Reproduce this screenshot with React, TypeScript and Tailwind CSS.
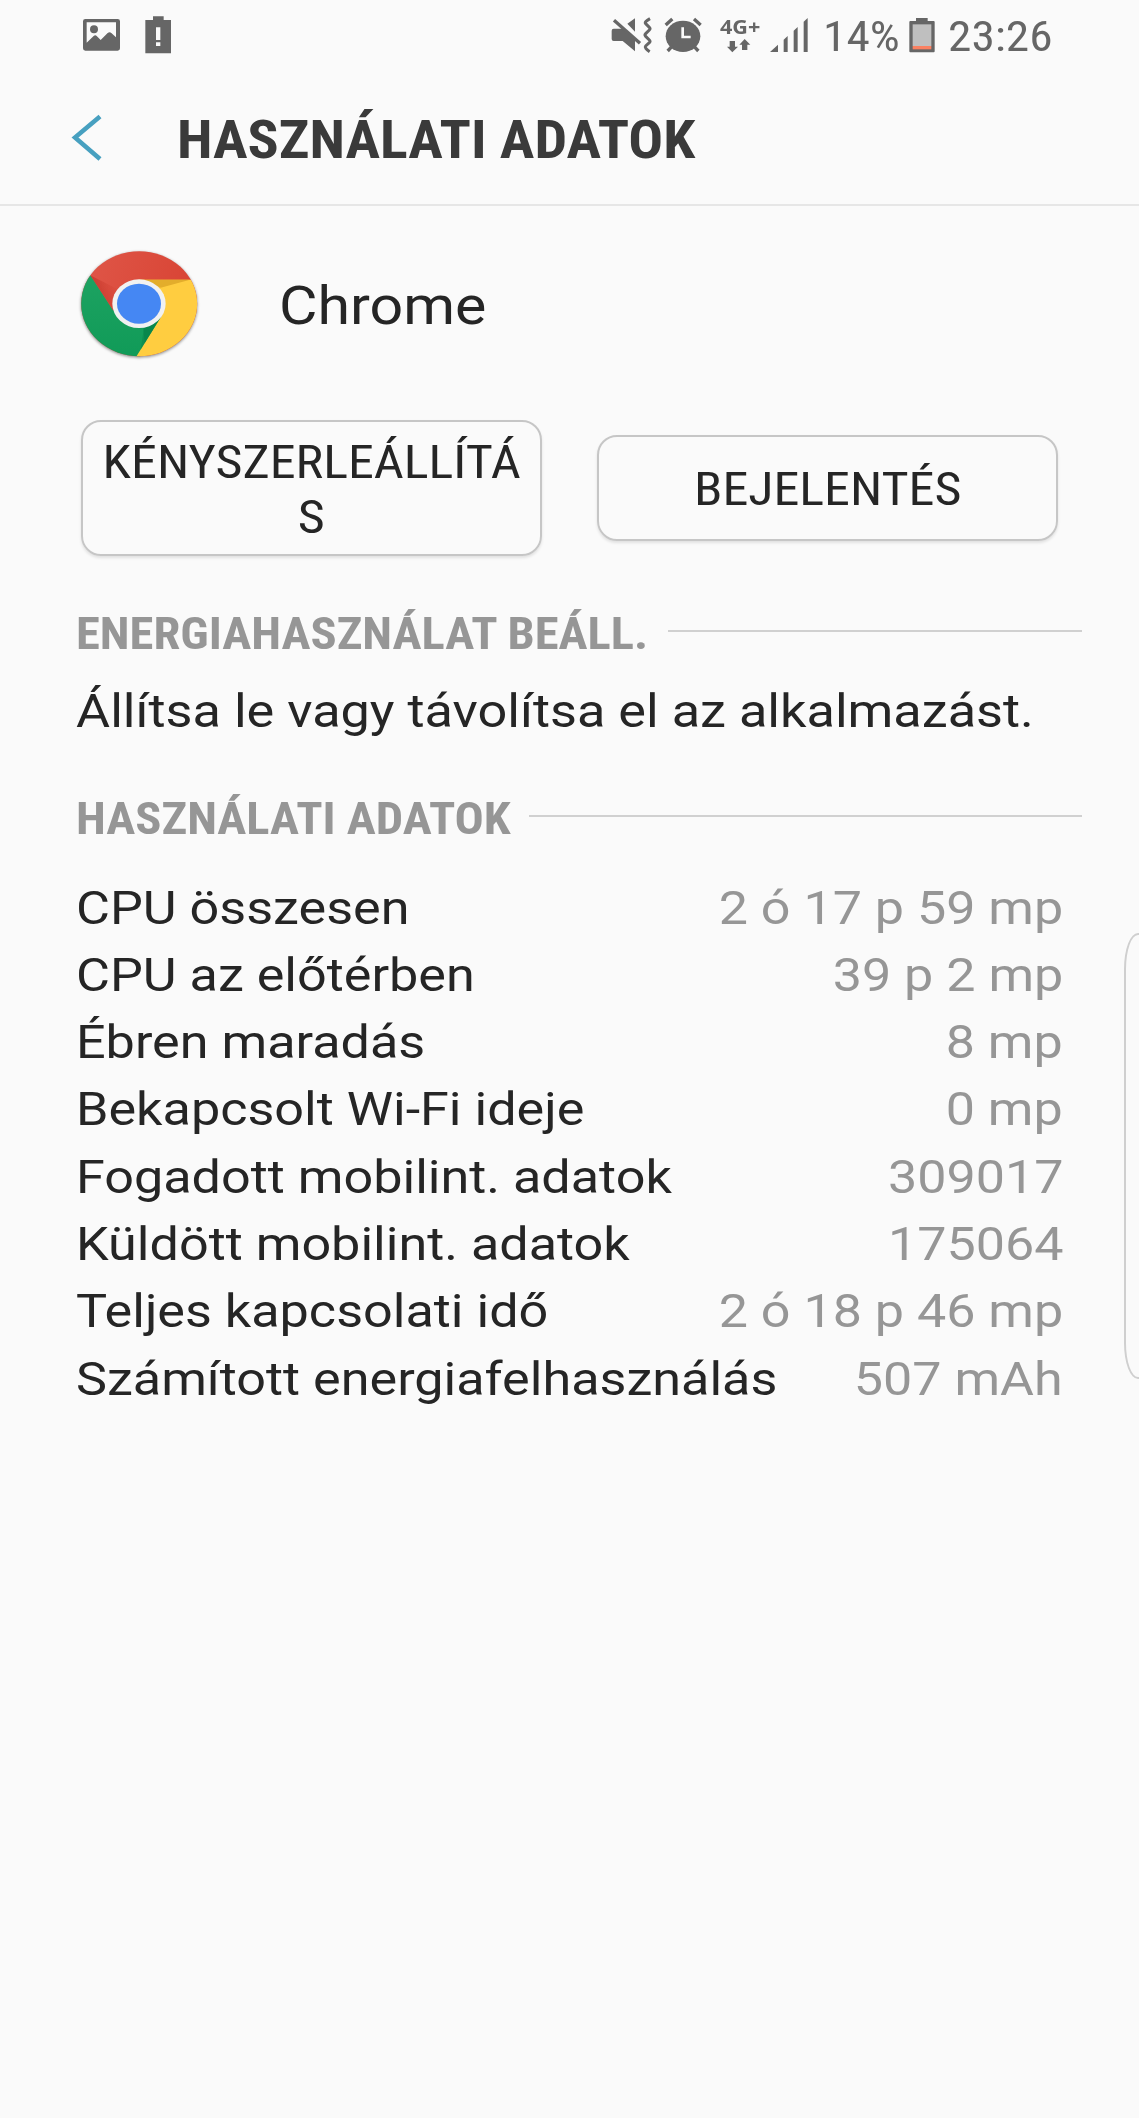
import { ReactNode } from "react";

const usage = [
  { label: "CPU összesen", value: "2 ó 17 p 59 mp" },
  { label: "CPU az előtérben", value: "39 p 2 mp" },
  { label: "Ébren maradás", value: "8 mp" },
  { label: "Bekapcsolt Wi-Fi ideje", value: "0 mp" },
  { label: "Fogadott mobilint. adatok", value: "309017" },
  { label: "Küldött mobilint. adatok", value: "175064" },
  { label: "Teljes kapcsolati idő", value: "2 ó 18 p 46 mp" },
  { label: "Számított energiafelhasználás", value: "507 mAh" },
];

function ImageIcon() {
  return (
    <svg className="h-[70px] w-[38px]" viewBox="69 0 114 210" fill="#666">
      <path
        fillRule="evenodd"
        d="M76 57h97a7 7 0 0 1 7 7v81a7 7 0 0 1-7 7H76a7 7 0 0 1-7-7V64a7 7 0 0 1 7-7zM80 67v61l21-20q5-4 9 0l12 12 21-21q6-5 11 0l14 13V67z"
      />
      <circle cx="102" cy="88" r="12" />
    </svg>
  );
}

function BatteryAlertIcon() {
  return (
    <svg className="ml-[24px] h-[70px] w-[27px]" viewBox="255 0 81 210" fill="#666">
      <path
        fillRule="evenodd"
        d="M279 49h32v11h22v100h-77V60h23zM288 82v38h13V82zM288 127v11h13v-11z"
      />
    </svg>
  );
}

function MuteIcon() {
  return (
    <svg className="h-[70px] w-[42px]" viewBox="33 0 126 210" fill="#666">
      <path d="M35 92q0-6 6-6h30l34 30v38L68 123H41q-6 0-6-6zM82 71l23-16v40z" />
      <path d="M42 61l78 69" stroke="#666" strokeWidth="10" fill="none" />
      <path
        d="M150 56q-18 10-13 15l11 11q4 4 0 8l-11 11q-4 4 0 8l11 11q4 4 0 8l-11 10q-5 6 12 17"
        stroke="#666"
        strokeWidth="9"
        fill="none"
      />
    </svg>
  );
}

function AlarmIcon() {
  return (
    <svg className="ml-[11px] h-[70px] w-[38px]" viewBox="192 0 114 210" fill="#666">
      <ellipse cx="249" cy="109" rx="52" ry="47" />
      <path d="M197 75l20-18M302 75l-20-18" stroke="#666" strokeWidth="10" />
      <path d="M203 153l15-16M295 153l-15-16" stroke="#666" strokeWidth="10" />
      <path d="M248 82v29h24" stroke="#fafafa" strokeWidth="8" fill="none" />
    </svg>
  );
}

function NetworkIcon() {
  return (
    <div className="ml-[18px] flex h-[70px] w-[40px] flex-col pt-[17px]">
      <span className="origin-left scale-x-[1.080] font-['Open_Sans',sans-serif] text-[20px] leading-[20px] font-bold text-[#666]">
        4G+
      </span>
      <svg className="mt-[2px] ml-[7px] h-[14px] w-[24px]" viewBox="385 118 72 42" fill="#666">
        <path d="M393 124h16v17h9l-17 17-16-17h8zM430 151h16v-16h9l-17-17-16 17h8z" />
      </svg>
    </div>
  );
}

function SignalIcon() {
  return (
    <svg className="ml-[10px] h-[70px] w-[38px]" viewBox="511 0 114 210" fill="#666">
      <path d="M511 156l24-22v22zM552 119l12-11v48h-12zM582 92l12-11v75h-12zM612 65l12-11v102h-12z" />
    </svg>
  );
}

function BatteryIcon() {
  return (
    <svg className="h-[70px] w-[26px]" viewBox="298 0 78 210">
      <path d="M319 54h35v9h18q3 0 3 3v88q0 3-3 3h-70q-3 0-3-3V66q0-3 3-3h17z" fill="#666" />
      <path d="M309 73h56v65h-56z" fill="#bfbfbf" />
      <path d="M309 138h56v10h-56z" fill="#fa8162" />
    </svg>
  );
}

function ChromeIcon() {
  return (
    <svg
      className="h-[110px] w-[122px] drop-shadow-[0_1px_1.5px_rgba(0,0,0,0.45)]"
      viewBox="28 56 366 330"
    >
      <defs>
        <clipPath id="disc">
          <ellipse cx="208.500" cy="220" rx="174" ry="157.500" />
        </clipPath>
        <linearGradient id="red" x1="0" y1="0" x2="1" y2="0.300">
          <stop offset="0" stopColor="#e0584a" />
          <stop offset="1" stopColor="#d84333" />
        </linearGradient>
        <linearGradient id="green" x1="0" y1="0" x2="0" y2="1">
          <stop offset="0" stopColor="#1ea362" />
          <stop offset="1" stopColor="#0f9a57" />
        </linearGradient>
        <linearGradient id="redShade" x1="1" y1="0" x2="0" y2="0.500">
          <stop offset="0" stopColor="#d84333" stopOpacity="0" />
          <stop offset="1" stopColor="#b3281f" stopOpacity="0.750" />
        </linearGradient>
      </defs>
      <g clipPath="url(#disc)">
        <path d="M20 40h380v340H20z" fill="url(#red)" />
        <path d="M62 135L20 120v280h180l76-142-146-18z" fill="url(#green)" />
        <path d="M207 148h200v250H188l88-142z" fill="#ffcd40" />
        <path d="M62 135l70 107 12-65z" fill="url(#redShade)" />
        <path d="M207 148h154l-88 24z" fill="#e3ad2b" />
        <path d="M275 258l-62 100 11-72z" fill="#07834a" opacity="0.500" />
        <path d="M275 258l-50 80-4-47z" fill="#07834a" opacity="0.700" />
      </g>
      <ellipse cx="208" cy="220" rx="80" ry="73" fill="#f1f1f1" />
      <ellipse cx="208" cy="220" rx="66" ry="60" fill="#4587f3" />
    </svg>
  );
}

function StatusBar() {
  return (
    <div className="flex h-[70px] pl-[83px] font-['Roboto_Condensed',Roboto,sans-serif] text-[42.500px] leading-[74px] text-[#666]">
      <ImageIcon />
      <BatteryAlertIcon />
      <div className="ml-[439px] flex">
        <MuteIcon />
        <AlarmIcon />
        <NetworkIcon />
        <SignalIcon />
      </div>
      <span className="ml-[15px] w-[86px] origin-left scale-x-[1.115]">14%</span>
      <BatteryIcon />
      <span className="ml-[13px] origin-left scale-x-[1.115]">23:26</span>
    </div>
  );
}

function Section({ title, className, titleClassName }: { title: ReactNode; className: string; titleClassName: string }) {
  return (
    <div className={`flex h-[54px] pl-[76px] pr-[57px] ${className}`}>
      <h2 className={`shrink-0 text-[45px] leading-[54px] font-bold whitespace-nowrap text-[#969696] ${titleClassName}`}>
        <span className="inline-block origin-left scale-x-[1.079] font-['Roboto_Condensed',Roboto,sans-serif]">{title}</span>
      </h2>
      <div className="mt-[23px] h-[2px] flex-1 bg-[#d0d0d0]" />
    </div>
  );
}

function App() {
  return (
    <div className="relative h-[2118px] w-[1139px] overflow-hidden bg-[#fafafa] font-[Roboto,sans-serif] text-[#252525]">
      <StatusBar />

      <header className="flex h-[136px] border-b-2 border-[#e6e6e6] pl-[70px]">
        <svg className="mt-[44px] h-[48px] w-[34px]" viewBox="0 0 34 48" fill="none" stroke="#47a0c0" strokeWidth="4.500">
          <path d="M30 2.500L5 23.500l25 21.500" />
        </svg>
        <h1 className="ml-[73px] origin-left scale-x-[1.072] font-['Roboto_Condensed',Roboto,sans-serif] text-[54px] leading-[140px] font-bold whitespace-nowrap text-[#3a3a3a]">
          HASZNÁLATI ADATOK
        </h1>
      </header>

      <div className="flex h-[196px] items-start pt-[43px] pl-[79px]">
        <ChromeIcon />
        <span className="ml-[77.500px] origin-left scale-x-[1.115] text-[53px] leading-[114px]">Chrome</span>
      </div>

      <div className="mt-[18px] flex h-[136px] items-center gap-[55px] pl-[81px] font-['Roboto_Condensed',Roboto,sans-serif]">
        <button className="flex h-[136px] w-[461px] flex-col items-center rounded-[20px] border-2 border-[#c6c6c6] pt-[12px] text-[47px] leading-[55px] shadow-[0_2px_3px_rgba(0,0,0,0.1)]">
          <span className="scale-x-[1.108]">KÉNYSZERLEÁLLÍTÁ</span>
          <span className="scale-x-[1.108]">S</span>
        </button>
        <button className="h-[106px] w-[461px] rounded-[20px] border-2 border-[#c6c6c6] text-[47px] leading-[104px] shadow-[0_2px_3px_rgba(0,0,0,0.1)]">
          <span className="inline-block scale-x-[1.108]">BEJELENTÉS</span>
        </button>
      </div>

      <Section title="ENERGIAHASZNÁLAT BEÁLL." className="mt-[51px]" titleClassName="w-[592px]" />
      <p className="mt-[16px] h-[68px] origin-left scale-x-[1.111] pl-[68.500px] text-[47px] leading-[68px] whitespace-nowrap">
        Állítsa le vagy távolítsa el az alkalmazást.
      </p>
      <Section title="HASZNÁLATI ADATOK" className="mt-[47px]" titleClassName="w-[453px]" />

      <dl className="mt-[27.500px] pr-[76px] pl-[76px] text-[47px] leading-[67.300px] whitespace-nowrap">
        {usage.map((item) => (
          <div key={item.label} className="flex justify-between">
            <dt className="origin-left scale-x-[1.109]">{item.label}</dt>
            <dd className="origin-right scale-x-[1.107] text-[#969696]">{item.value}</dd>
          </div>
        ))}
      </dl>

      {/* edge panel handle */}
      <div className="absolute top-[933px] -right-[21px] h-[446px] w-[36px] rounded-l-[14px_36px] border-2 border-[#cfcfcf]" />
    </div>
  );
}

export default App;
